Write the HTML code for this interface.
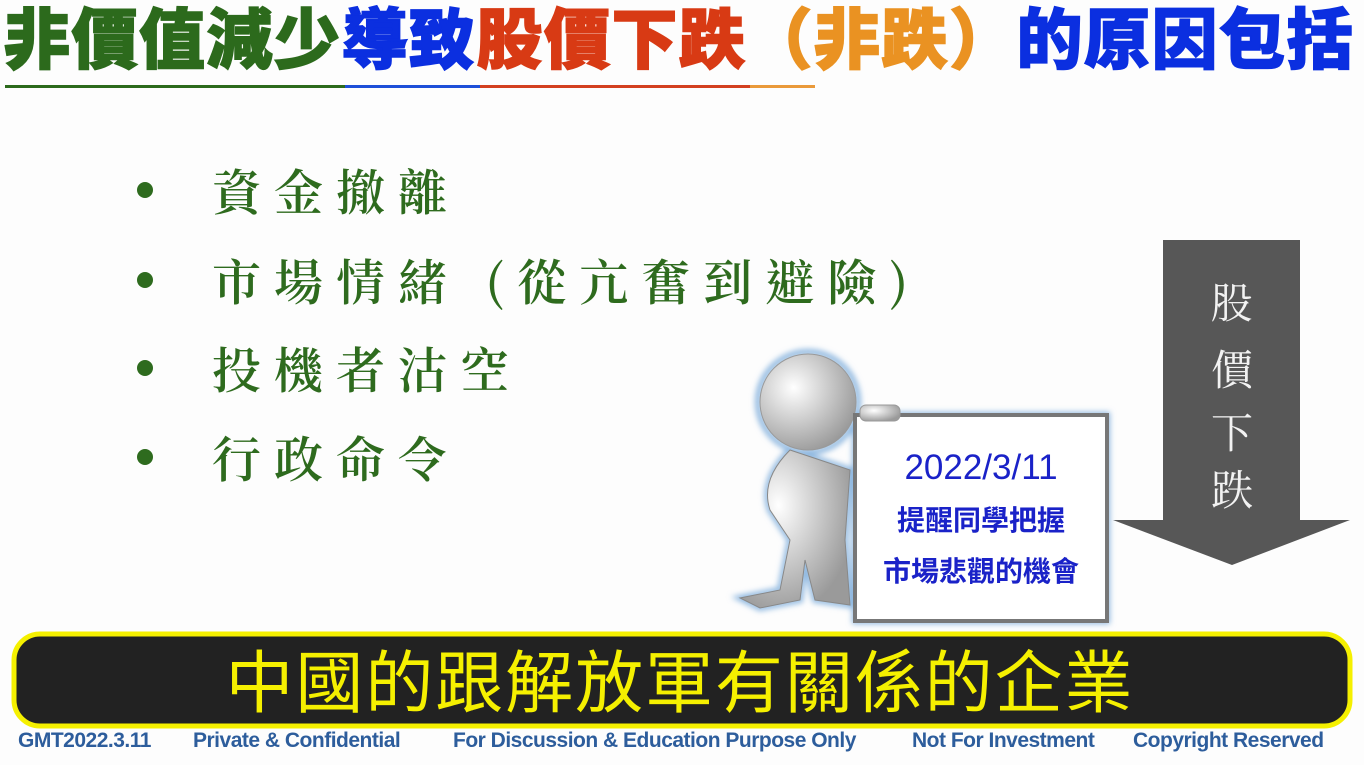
<!DOCTYPE html>
<html><head><meta charset="utf-8"><style>
body{margin:0;width:1364px;height:765px;background:#fdfdfd;position:relative;overflow:hidden;font-family:"Liberation Sans","Noto Sans CJK TC",sans-serif}
.t{position:absolute;left:4px;top:0;font-size:66px;font-weight:900;white-space:nowrap;line-height:80px;letter-spacing:1.5px;-webkit-text-stroke:1.5px currentColor}
.ul{position:absolute;top:85px;height:3px}
.b{position:absolute;left:212px;font-family:"Noto Serif CJK TC","Noto Serif CJK SC",serif;font-weight:600;color:#2e6b1e;font-size:49px;letter-spacing:13px;white-space:nowrap;line-height:60px}
.dot{position:absolute;left:137px;width:16px;height:16px;border-radius:50%;background:#2e6b1e}
.f{position:absolute;top:729px;font-size:21px;font-weight:bold;color:#2d5d9c;white-space:nowrap;letter-spacing:-0.5px}
</style></head><body>
<div class="t"><span style="color:#2c6a1c">非價值減少</span><span style="color:#0b2fe0">導致</span><span style="color:#d83a14">股價下跌</span><span style="color:#ea9222">（非跌）</span><span style="color:#0b2fe0">的原因包括</span></div>
<div class="ul" style="left:5px;width:340px;background:#2c6a1c"></div>
<div class="ul" style="left:345px;width:135px;background:#1e4fd8"></div>
<div class="ul" style="left:480px;width:270px;background:#d34020"></div>
<div class="ul" style="left:750px;width:65px;background:#ea9a3a"></div>

<div class="dot" style="top:182px"></div><div class="b" style="top:160px">資金撤離</div>
<div class="dot" style="top:272px"></div><div class="b" style="top:250px">市場情緒 (從亢奮到避險)</div>
<div class="dot" style="top:360px"></div><div class="b" style="top:338px">投機者沽空</div>
<div class="dot" style="top:449px"></div><div class="b" style="top:427px">行政命令</div>

<svg style="position:absolute;left:0;top:0" width="1364" height="765">
<defs><radialGradient id="g" cx="0.35" cy="0.35" r="0.7"><stop offset="0" stop-color="#fff"/><stop offset="1" stop-color="#9a9a9a"/></radialGradient>
<filter id="gl"><feGaussianBlur stdDeviation="3"/></filter></defs>
<rect x="1163" y="240" width="137" height="282" fill="#575757"/>
<polygon points="1113,520 1350,520 1232,565" fill="#575757"/>
<g stroke="#8fb8e0" stroke-width="6" fill="none" filter="url(#gl)">
<circle cx="808" cy="402" r="50"/><rect x="855" y="415" width="252" height="206"/>
<path d="M790 450 Q760 480 770 510 L790 540 L780 590 L740 598 L760 608 L800 600 L805 560 L815 600 L850 605 L845 540 L850 470 Z"/></g>
<path d="M790 450 Q760 480 770 510 L790 540 L780 590 L740 598 L760 608 L800 600 L805 560 L815 600 L850 605 L845 540 L850 470 Z" fill="url(#g)" stroke="#888"/>
<circle cx="808" cy="402" r="48" fill="url(#g)" stroke="#999"/>
<rect x="855" y="415" width="252" height="206" fill="#fff" stroke="#777" stroke-width="4"/>
<rect x="860" y="405" width="40" height="16" rx="6" fill="url(#g)" stroke="#999"/>
<g font-family="Noto Serif CJK TC,Noto Serif CJK SC,serif" font-size="42" fill="#f2f2f2" text-anchor="middle">
<text x="1232" y="318">股</text><text x="1232" y="385">價</text><text x="1232" y="448">下</text><text x="1232" y="505">跌</text></g>
<text x="981" y="479" font-family="Liberation Sans,sans-serif" font-size="35" fill="#1a22c8" text-anchor="middle">2022/3/11</text>
<text x="981" y="530" font-family="Liberation Sans,Noto Sans CJK TC,sans-serif" font-size="28" font-weight="bold" fill="#1a22c8" text-anchor="middle">提醒同學把握</text>
<text x="981" y="581" font-family="Liberation Sans,Noto Sans CJK TC,sans-serif" font-size="28" font-weight="bold" fill="#1a22c8" text-anchor="middle">市場悲觀的機會</text>
<rect x="14" y="634" width="1336" height="92" rx="26" fill="#222" stroke="#f5f000" stroke-width="5"/>
<text x="683" y="707" font-family="Liberation Sans,Noto Sans CJK TC,sans-serif" font-size="68" fill="#f5f000" text-anchor="middle" letter-spacing="8" textLength="915" lengthAdjust="spacing">中國的跟解放軍有關係的企業</text>
</svg>
<div class="f" style="left:18px">GMT2022.3.11</div>
<div class="f" style="left:193px">Private &amp; Confidential</div>
<div class="f" style="left:453px">For Discussion &amp; Education Purpose Only</div>
<div class="f" style="left:912px">Not For Investment</div>
<div class="f" style="left:1133px">Copyright Reserved</div>
</body></html>
